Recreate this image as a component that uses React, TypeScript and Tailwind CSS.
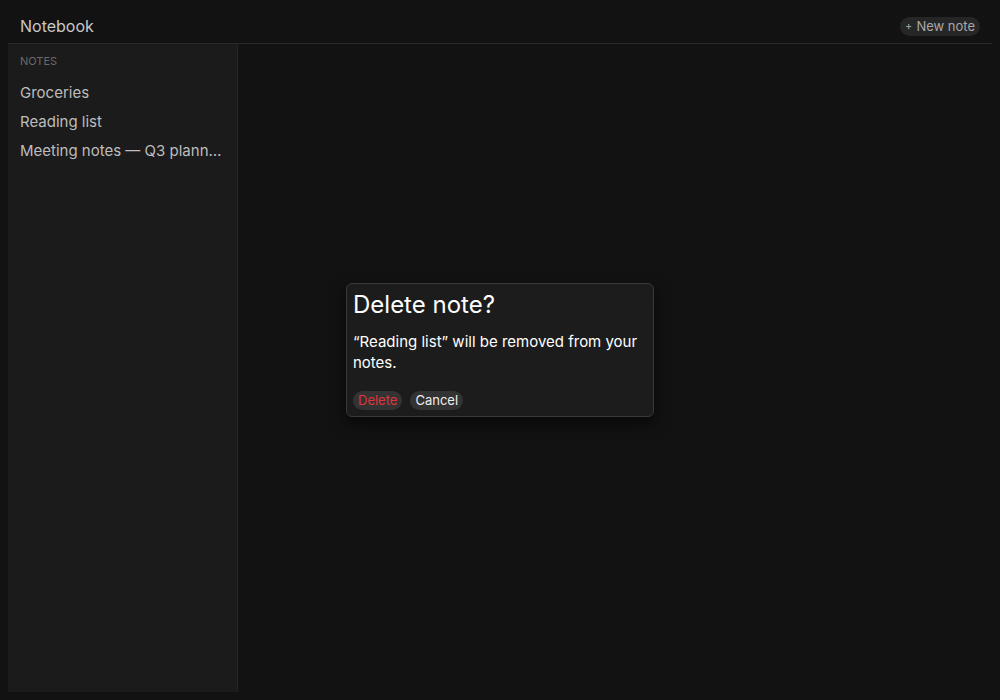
import React from "react";

export default function App() {
  const notes = ["Groceries", "Reading list", "Meeting notes — Q3 planning and roadmap"];
  return (
    <div
      className="w-[1000px] h-[700px] bg-[#121212] p-2 flex flex-col relative overflow-hidden"
      style={{ fontFamily: "Inter, 'Noto Sans', sans-serif" }}
    >
      <header className="h-[36px] flex items-center justify-between px-3 border-b border-[#2a2a2a] shrink-0">
        <span className="text-[16px] text-[#c8c8c8]">Notebook</span>
        <button className="h-[19px] mt-[2px] px-[5px] rounded-full bg-[#262626] text-[13px] text-[#a8a8a8] flex items-center leading-none">
          <span className="text-[11px] mr-[4px]">+</span>New note
        </button>
      </header>
      <div className="flex flex-1 min-h-0">
        <aside className="w-[230px] bg-[#1b1b1b] border-r border-[#262626] px-3 pt-[9px] flex flex-col">
          <div className="text-[11px] text-[#6a6a6a] uppercase leading-[16px] mb-[9px]">Notes</div>
          {notes.map((n) => (
            <div key={n} className="text-[15px] text-[#bdbdbd] leading-[29px] truncate">
              {n}
            </div>
          ))}
        </aside>
        <main className="flex-1" />
      </div>
      <div className="absolute left-[346px] top-[283px] w-[308px] h-[134px] bg-[#1c1c1c] border border-[#3a3a3a] rounded-[6px] shadow-[0_6px_16px_rgba(0,0,0,0.6)] px-[6px] pt-[4px] flex flex-col">
        <h2 className="text-[24px] text-white leading-[34px]">Delete note?</h2>
        <p className="text-[15px] text-white leading-[21px] mt-[9px]">
          “Reading list” will be removed from your notes.
        </p>
        <div className="flex gap-[8px] mt-[18px]">
          <button className="h-[19px] px-[5px] rounded-full bg-[#333333] text-[13px] text-[#e0333c] leading-none">
            Delete
          </button>
          <button className="h-[19px] px-[5px] rounded-full bg-[#333333] text-[13px] text-[#eeeeee] leading-none">
            Cancel
          </button>
        </div>
      </div>
    </div>
  );
}
